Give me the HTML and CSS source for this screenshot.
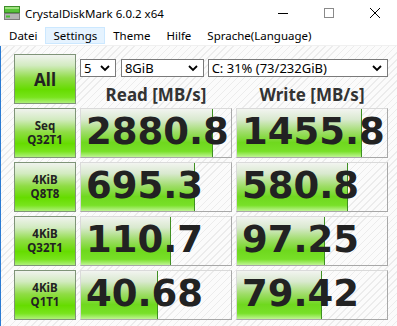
FILE: index.html
```html
<!DOCTYPE html>
<html lang="de">

<head>
    <meta charset="UTF-8">
    <title>CrystalDiskMark 6.0.2 x64</title>
    <link rel="stylesheet" href="styles.css">
</head>

<body>
    <div class="window">
        <div class="titlebar">
            <svg class="app-icon" width="16" height="14" viewBox="0 0 16 14">
                <rect x="0.5" y="0.5" width="15" height="6" fill="#58c23a" stroke="#3e8e2a"/>
                <rect x="1" y="1" width="14" height="2" fill="#9ee27e"/>
                <rect x="0.5" y="7.5" width="15" height="6" fill="#b4b4b4" stroke="#7c7c7c"/>
                <rect x="2" y="9.5" width="4" height="2" fill="#46c030"/>
            </svg>
            <span class="title">CrystalDiskMark 6.0.2 x64</span>
            <div class="controls">
                <svg width="46" height="26" viewBox="0 0 46 26"><path d="M18 13.5h10" stroke="#000" stroke-width="1"/></svg>
                <svg width="46" height="26" viewBox="0 0 46 26"><rect x="18.5" y="8.5" width="9" height="9" fill="none" stroke="#8a8a8a"/></svg>
                <svg width="46" height="26" viewBox="0 0 46 26"><path d="M18 8l10 10M28 8l-10 10" stroke="#000" stroke-width="1"/></svg>
            </div>
        </div>

        <div class="menubar">
            <span class="menu-item">Datei</span>
            <span class="menu-item active">Settings</span>
            <span class="menu-item">Theme</span>
            <span class="menu-item">Hilfe</span>
            <span class="menu-item">Sprache(Language)</span>
        </div>

        <div class="main">
            <div class="board">
                <div class="label-box all">All</div>
                <div class="top">
                    <div class="selects">
                        <div class="select count"><span>5</span><svg width="10" height="7" viewBox="0 0 10 7"><path d="M1 1l4 4 4-4" fill="none" stroke="#000" stroke-width="1.8"/></svg></div>
                        <div class="select size"><span>8GiB</span><svg width="10" height="7" viewBox="0 0 10 7"><path d="M1 1l4 4 4-4" fill="none" stroke="#000" stroke-width="1.8"/></svg></div>
                        <div class="select drive"><span>C: 31% (73/232GiB)</span><svg width="10" height="7" viewBox="0 0 10 7"><path d="M1 1l4 4 4-4" fill="none" stroke="#000" stroke-width="1.8"/></svg></div>
                    </div>
                    <div class="heads">
                        <div class="head">Read [MB/s]</div>
                        <div class="head">Write [MB/s]</div>
                    </div>
                </div>

                <div class="label-box"><span>Seq</span><span>Q32T1</span></div>
                <div class="result"><div class="bar" style="width: 132px"></div><span class="value">2880.8</span></div>
                <div class="result"><div class="bar" style="width: 125px"></div><span class="value">1455.8</span></div>

                <div class="label-box"><span>4KiB</span><span>Q8T8</span></div>
                <div class="result"><div class="bar" style="width: 114px"></div><span class="value">695.3</span></div>
                <div class="result"><div class="bar" style="width: 111px"></div><span class="value">580.8</span></div>

                <div class="label-box"><span>4KiB</span><span>Q32T1</span></div>
                <div class="result"><div class="bar" style="width: 90px"></div><span class="value">110.7</span></div>
                <div class="result"><div class="bar" style="width: 88px"></div><span class="value">97.25</span></div>

                <div class="label-box"><span>4KiB</span><span>Q1T1</span></div>
                <div class="result"><div class="bar" style="width: 77px"></div><span class="value">40.68</span></div>
                <div class="result"><div class="bar" style="width: 85px"></div><span class="value">79.42</span></div>
            </div>
        </div>
    </div>
</body>

</html>
```

FILE: styles.css
```css
/* Window frame */
body {
    margin: 0;
    font-family: "Noto Sans", "Open Sans", sans-serif;
    color: #000;
    background: #fff;
}

.window {
    width: 397px;
    height: 326px;
    overflow: hidden;
    display: flex;
    flex-direction: column;
}

/* Title bar */
.titlebar {
    height: 26px;
    display: flex;
    align-items: center;
    background: #fff;
}

.app-icon {
    margin-left: 4px;
    margin-top: -1px;
}

.title {
    margin-left: 5px;
    font-size: 11.5px;
}

.controls {
    margin-left: auto;
    display: flex;
    margin-right: -1px;
}

.controls svg {
    display: block;
}

/* Menu */
.menubar {
    height: 19px;
    display: flex;
    align-items: center;
    padding-left: 1px;
    border-bottom: 1px solid #f0f0f0;
}

.menu-item {
    font-size: 11.5px;
    padding: 0 7px;
    height: 17px;
    line-height: 16px;
    border: 1px solid transparent;
    box-sizing: border-box;
}

.menu-item.active {
    background: #e5f3ff;
    border-color: #cce8ff;
}

/* Main area with hatched background */
.main {
    flex: 1;
    border-left: 1px solid #2b7bd3;
    padding: 8px 0 0 13px;
    background: repeating-linear-gradient(135deg, #fbfbfb 0 4px, #ececec 4px 5px);
}

.board {
    display: grid;
    grid-template-columns: 62px 152px 152px;
    grid-auto-rows: 50px;
    gap: 4px;
}

.label-box {
    box-sizing: border-box;
    border: 1px solid #7f9478;
    background: linear-gradient(#f0f3ee 0%, #d2ebc0 22%, #8fdc45 48%, #66dc00 72%, #78e41c 88%, #aef07a 100%);
    display: flex;
    flex-direction: column;
    align-items: center;
    justify-content: center;
    gap: 0;
    font-size: 11.5px;
    font-weight: bold;
    line-height: 14px;
    color: #222;
}

.label-box.all {
    font-size: 17px;
    padding-top: 2px;
}

.top {
    grid-column: 2 / 4;
    display: flex;
    flex-direction: column;
}

.selects {
    display: flex;
    margin-top: 5px;
    gap: 5px;
}

.select {
    box-sizing: border-box;
    height: 18px;
    border: 1px solid #7a7a7a;
    background: #fff;
    display: flex;
    align-items: center;
    justify-content: space-between;
    padding: 0 5px 0 3px;
    font-size: 13px;
}

.select svg {
    display: block;
}

.select.count {
    width: 36px;
}

.select.size {
    width: 83px;
}

.select.drive {
    width: 181px;
    margin-left: -1px;
}

.heads {
    display: grid;
    grid-template-columns: 152px 152px;
    gap: 4px;
    margin-top: 6px;
}

.head {
    text-align: center;
    font-size: 17px;
    font-weight: bold;
    color: #333;
}

/* Result boxes */
.result {
    position: relative;
    box-sizing: border-box;
    border: 1px solid #a8a8a8;
    border-top-color: #dadada;
    border-left-color: #dadada;
    display: flex;
    align-items: center;
    padding: 0 0 4px 5px;
    overflow: hidden;
}

.bar {
    position: absolute;
    left: 0;
    top: 0;
    bottom: 0;
    box-sizing: border-box;
    border-right: 1px solid #3f8f22;
    background: linear-gradient(#f2f4f0 0%, #d9e9cf 22%, #9edd68 48%, #6fd81e 70%, #78e028 88%, #bff494 100%);
}

.value {
    position: relative;
    font-family: "DejaVu Sans", sans-serif;
    font-weight: bold;
    font-size: 37px;
    color: #222;
    white-space: nowrap;
}
```
